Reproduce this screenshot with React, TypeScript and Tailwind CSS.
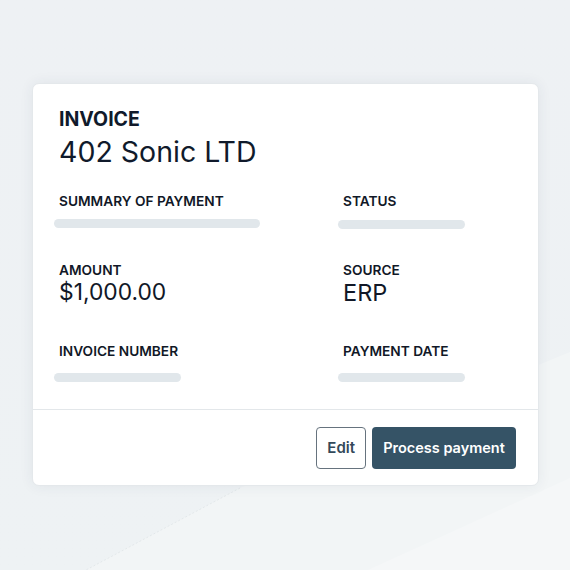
import React from 'react'

const font = { fontFamily: 'Inter, "Noto Sans", sans-serif' }

function Label({ children }: { children: React.ReactNode }) {
  return (
    <div className="text-[13.7px] leading-[20px] font-semibold text-[#111827]">{children}</div>
  )
}

function Bar({ w }: { w: string }) {
  return <div className={`h-[9px] rounded-full bg-[#e1e7eb] -ml-[5px] ${w}`} />
}

export default function App() {
  return (
    <div
      className="relative w-[570px] h-[570px] overflow-hidden bg-gradient-to-b from-[#eef1f4] to-[#eef2f4]"
      style={font}
    >
      {/* background facets */}
      <svg className="absolute inset-0" width="570" height="570" viewBox="0 0 570 570">
        <polygon points="240,488 570,352 570,570 86,570" fill="#f2f5f6" />
        <polygon points="570,478 570,570 368,570" fill="#f5f7f8" />
        <line x1="240" y1="488" x2="86" y2="570" stroke="#dfe4e7" strokeWidth="0.8" strokeDasharray="2 2" />
      </svg>

      <div className="relative pt-[83px] pl-[32px]">
        <div className="w-[507px] h-[403px] bg-white rounded-[7px] border border-[#e4e8eb] shadow-[0_0_14px_rgba(40,60,80,0.07)] flex flex-col">
          <div className="pl-[26px] pt-[23px] pr-[26px]">
            <div className="text-[19.5px] leading-[24px] font-bold text-[#101a2b]">INVOICE</div>
            <div className="mt-[5px] text-[28.5px] leading-[32px] text-[#101a2b]">402 Sonic LTD</div>

            <div className="mt-[23px] grid grid-cols-[284px_1fr]">
              <div>
                <Label>SUMMARY OF PAYMENT</Label>
                <div className="mt-[8px]">
                  <Bar w="w-[206px]" />
                </div>
              </div>
              <div>
                <Label>STATUS</Label>
                <div className="mt-[9px]">
                  <Bar w="w-[127px]" />
                </div>
              </div>
            </div>

            <div className="mt-[31px] grid grid-cols-[284px_1fr]">
              <div>
                <Label>AMOUNT</Label>
                <div className="text-[22.8px] leading-[24px] text-[#111827]">$1,000.00</div>
              </div>
              <div>
                <Label>SOURCE</Label>
                <div className="text-[23.5px] leading-[26px] text-[#111827]">ERP</div>
              </div>
            </div>

            <div className="mt-[35px] grid grid-cols-[284px_1fr]">
              <div>
                <Label>INVOICE NUMBER</Label>
                <div className="mt-[12px]">
                  <Bar w="w-[127px]" />
                </div>
              </div>
              <div>
                <Label>PAYMENT DATE</Label>
                <div className="mt-[12px]">
                  <Bar w="w-[127px]" />
                </div>
              </div>
            </div>
          </div>

          <div className="mt-auto border-t border-[#e3e7ea] flex justify-end gap-[6px] pt-[17px] pb-[16px] pr-[22px]">
            <button className="h-[42px] px-[10px] rounded-[4px] border border-[#66737e] bg-white text-[15px] font-semibold text-[#33495a]">
              Edit
            </button>
            <button className="h-[42px] w-[144px] rounded-[4px] bg-[#355366] text-[14.5px] font-semibold text-white">
              Process payment
            </button>
          </div>
        </div>
      </div>
    </div>
  )
}
